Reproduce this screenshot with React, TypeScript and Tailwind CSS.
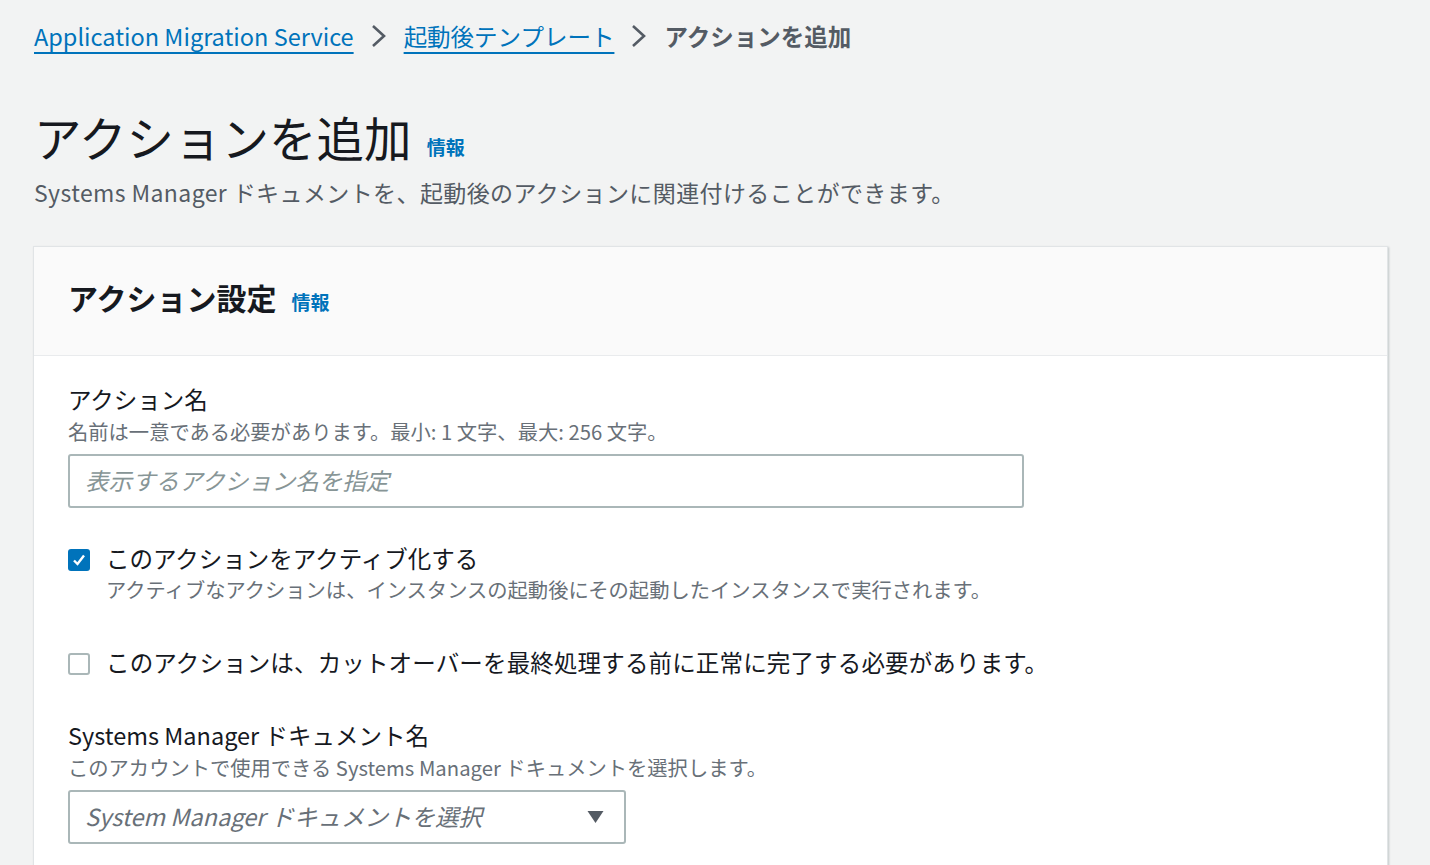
const font = { fontFamily: '"Noto Sans CJK JP", "Noto Sans", sans-serif' }

function Chevron() {
  return (
    <svg viewBox="0 0 16 24" className="mx-[17px] h-[24px] w-[16px]">
      <path d="M2 2 L13 12 L2 22" fill="none" stroke="#545b64" strokeWidth="2.6" />
    </svg>
  )
}

function Crumb() {
  return (
    <nav className="flex h-[32px] items-center text-[23.5px] leading-[32px]">
      <a className="text-[#0073bb] underline decoration-[1.5px] underline-offset-[6px]">Application Migration Service</a>
      <Chevron />
      <a className="text-[#0073bb] underline decoration-[1.5px] underline-offset-[6px]">起動後テンプレート</a>
      <Chevron />
      <span className="font-bold text-[#545b64]">アクションを追加</span>
    </nav>
  )
}

function Info() {
  return <span className="ml-[15px] text-[19px] font-bold text-[#0073bb]">情報</span>
}

function Checkbox({ checked }: { checked: boolean }) {
  if (checked) {
    return (
      <span className="mt-[6px] flex h-[22px] w-[22px] shrink-0 items-center justify-center rounded-[3px] bg-[#0073bb]">
        <svg viewBox="0 0 16 16" className="h-[16px] w-[16px]">
          <path d="M3 8.5 L6.5 12 L13 3.5" fill="none" stroke="white" strokeWidth="2.4" />
        </svg>
      </span>
    )
  }
  return <span className="mt-[6px] h-[22px] w-[22px] shrink-0 rounded-[3px] border-2 border-[#aab7b8] bg-white" />
}

export default function App() {
  return (
    <div className="min-h-screen bg-[#f2f3f3] pl-[34px] pr-[42px] pt-[20px] text-[#16191f]" style={font}>
      <Crumb />

      <div className="mt-[57px] flex items-end">
        <h1 className="text-[47.5px] font-normal leading-[56px]">アクションを追加</h1>
        <span className="mb-[4px]"><Info /></span>
      </div>
      <p className="mt-[13px] text-[23px] leading-[28px] tracking-[0.4px] text-[#545b64]">
        Systems Manager ドキュメントを、起動後のアクションに関連付けることができます。
      </p>

      <div className="-ml-px mt-[40px] border border-[#e1e4e6] bg-white shadow-[1px_1px_2px_rgba(0,28,36,0.2)]">
        <div className="h-[109px] border-b border-[#e9ebed] bg-[#fafafa] pl-[34px] pt-[31px]">
          <h2 className="flex items-baseline text-[30px] font-bold leading-[38px]">
            アクション設定
            <Info />
          </h2>
        </div>

        <div className="pb-[40px] pl-[34px] pt-[28px]">
          <div className="text-[23.5px] leading-[30px]">アクション名</div>
          <div className="mt-[4px] text-[20.3px] leading-[26px] text-[#687078]">
            名前は一意である必要があります。最小: 1 文字、最大: 256 文字。
          </div>
          <div className="mt-[10px] flex h-[54px] w-[956px] items-center rounded-[3px] border-2 border-[#aab7b8] px-[15px]">
            <span className="text-[23.5px] italic text-[#879596]">表示するアクション名を指定</span>
          </div>

          <div className="mt-[35px] flex gap-[16px]">
            <Checkbox checked />
            <div>
              <div className="text-[23.5px] leading-[30px]">このアクションをアクティブ化する</div>
              <div className="mt-[3px] text-[20.3px] leading-[26px] text-[#687078]">
                アクティブなアクションは、インスタンスの起動後にその起動したインスタンスで実行されます。
              </div>
            </div>
          </div>

          <div className="mt-[45px] flex gap-[16px]">
            <Checkbox checked={false} />
            <div className="text-[23.5px] leading-[30px] tracking-[0.15px]">
              このアクションは、カットオーバーを最終処理する前に正常に完了する必要があります。
            </div>
          </div>

          <div className="mt-[43px] text-[23.5px] leading-[30px]">Systems Manager ドキュメント名</div>
          <div className="mt-[4px] text-[20.3px] leading-[26px] text-[#687078]">
            このアカウントで使用できる Systems Manager ドキュメントを選択します。
          </div>
          <div className="mt-[10px] flex h-[54px] w-[558px] items-center justify-between rounded-[3px] border-2 border-[#aab7b8] pl-[15px] pr-[20px]">
            <span className="text-[23.5px] italic text-[#687078]">System Manager ドキュメントを選択</span>
            <svg viewBox="0 0 16 12" className="h-[12px] w-[17px]">
              <path d="M0 0 H16 L8 12 Z" fill="#545b64" />
            </svg>
          </div>
        </div>
      </div>
    </div>
  )
}
